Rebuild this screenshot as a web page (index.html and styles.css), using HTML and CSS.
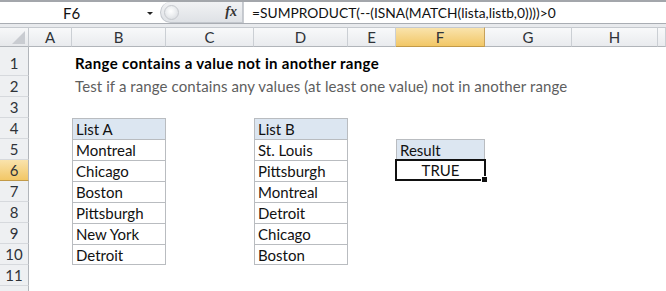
FILE: index.html
```html
<!DOCTYPE html>
<html>
<head>
<meta charset="utf-8">
<link rel="stylesheet" href="styles.css">
</head>
<body>
<div class="app">
  <div class="fbar">
    <div class="namebox"><span class="name">F6</span><span class="arrow"></span></div>
    <div class="fxpill"><span class="knob"></span><span class="fx">fx</span></div>
    <div class="formula">=SUMPRODUCT(--(ISNA(MATCH(lista,listb,0))))&gt;0</div>
  </div>
  <div class="band"></div>
  <div class="sheet">
    <div class="corner"><svg width="29" height="20" viewBox="0 0 29 20"><polygon points="12,17 25,17 25,4" fill="#c9ccd1"/></svg></div>
    <div class="ch">A</div>
    <div class="ch">B</div>
    <div class="ch">C</div>
    <div class="ch">D</div>
    <div class="ch">E</div>
    <div class="ch sel">F</div>
    <div class="ch">G</div>
    <div class="ch">H</div>
    <div class="ch last"></div>

    <div class="rh r1">1</div>
    <div class="rh r2">2</div>
    <div class="rh r3">3</div>
    <div class="rh r4">4</div>
    <div class="rh r5">5</div>
    <div class="rh r6 sel">6</div>
    <div class="rh r7">7</div>
    <div class="rh r8">8</div>
    <div class="rh r9">9</div>
    <div class="rh r10">10</div>
    <div class="rh r11">11</div>
    <div class="rh r12"></div>

    <div class="title">Range contains a value not in another range</div>
    <div class="subtitle">Test if a range contains any values (at least one value) not in another range</div>

    <div class="list list-a">
      <div class="item head">List A</div>
      <div class="item">Montreal</div>
      <div class="item">Chicago</div>
      <div class="item">Boston</div>
      <div class="item">Pittsburgh</div>
      <div class="item">New York</div>
      <div class="item">Detroit</div>
    </div>

    <div class="list list-b">
      <div class="item head">List B</div>
      <div class="item">St. Louis</div>
      <div class="item">Pittsburgh</div>
      <div class="item">Montreal</div>
      <div class="item">Detroit</div>
      <div class="item">Chicago</div>
      <div class="item">Boston</div>
    </div>

    <div class="result-head">Result</div>
    <div class="result">TRUE<span class="handle"></span></div>
  </div>
</div>
</body>
</html>
```
FILE: styles.css
```css
html, body {
  margin: 0;
  padding: 0;
  background: #ffffff;
}
.app {
  width: 666px;
  height: 291px;
  overflow: hidden;
  font-family: Lato, "Open Sans", sans-serif;
  color: #1a1a1a;
}
.fbar {
  height: 21px;
  border-top: 2px solid #a3a6ab;
  display: flex;
  background: #ffffff;
}
.namebox {
  width: 160px;
  display: flex;
  align-items: center;
}
.name {
  width: 143px;
  text-align: center;
  font-size: 15px;
  color: #111;
}
.arrow {
  width: 0;
  height: 0;
  border-left: 3px solid transparent;
  border-right: 3px solid transparent;
  border-top: 3px solid #222;
  margin-left: 4px;
  margin-top: 1px;
}
.fxpill {
  width: 83px;
  height: 21px;
  background: linear-gradient(#f1f2f4, #dfe2e6);
  border: 1px solid #c3c7cd;
  border-top: none;
  border-top-left-radius: 11px;
  border-bottom-left-radius: 11px;
  display: flex;
  align-items: center;
  justify-content: space-between;
  box-sizing: border-box;
  padding: 0 5px 0 3px;
}
.knob {
  width: 15px;
  height: 15px;
  border-radius: 50%;
  background: radial-gradient(circle at 45% 40%, #ffffff 0, #eef0f2 40%, #d3d6db 100%);
  border: 1px solid #c6c9ce;
  box-sizing: border-box;
}
.fx {
  font-family: "Liberation Serif", serif;
  font-style: italic;
  font-weight: bold;
  font-size: 14px;
  color: #333;
}
.formula {
  flex: 1;
  border-left: 1px solid #c9ccd1;
  padding-left: 8px;
  font-size: 13.8px;
  line-height: 21px;
  color: #111;
  white-space: nowrap;
}
.band {
  height: 3px;
  border-top: 1px solid #a9adb3;
  background: #e8eaed;
}
.sheet {
  display: grid;
  grid-template-columns: 29px 43px 94px 88px 94px 48px 89px 87px 86px 8px;
  grid-template-rows: 20px 29px repeat(10, 21px) 21px;
}
.corner {
  grid-row: 1;
  grid-column: 1;
  background: linear-gradient(#f7f8f9, #e6e8eb);
  border-right: 1px solid #c5c9ce;
  border-bottom: 1px solid #b1b5ba;
  border-top: 1px solid #c5c9ce;
  box-sizing: border-box;
}
.corner svg {
  display: block;
  margin-top: -1px;
}
.ch {
  grid-row: 1;
  background: linear-gradient(#f8f9fa, #e9ebee);
  border-right: 1px solid #cbcfd4;
  border-bottom: 1px solid #b1b5ba;
  border-top: 1px solid #c5c9ce;
  box-sizing: border-box;
  text-align: center;
  font-size: 15px;
  line-height: 18px;
  color: #2f3338;
}
.ch.sel {
  background: linear-gradient(#f9e3ac, #f2c766);
  border-right-color: #c7a15a;
  border-bottom-color: #c29a48;
}
.rh {
  grid-column: 1;
  background: #eef0f2;
  border-right: 1px solid #b1b5ba;
  border-bottom: 1px solid #d6d9dd;
  box-sizing: border-box;
  font-size: 15px;
  color: #2f3338;
  display: flex;
  align-items: flex-end;
  justify-content: center;
  line-height: 20px;
}
.rh.sel {
  background: linear-gradient(#f9e3ac, #f2c766);
  border-bottom-color: #c29a48;
}
.r1 { grid-row: 2; line-height: 24px; }
.r2 { grid-row: 3; }
.r3 { grid-row: 4; }
.r4 { grid-row: 5; }
.r5 { grid-row: 6; }
.r6 { grid-row: 7; }
.r7 { grid-row: 8; }
.r8 { grid-row: 9; }
.r9 { grid-row: 10; }
.r10 { grid-row: 11; }
.r11 { grid-row: 12; }
.r12 { grid-row: 13; }

.title {
  grid-row: 2;
  grid-column: 3 / 11;
  align-self: end;
  padding-left: 3px;
  padding-bottom: 2px;
  font-size: 15px;
  font-weight: bold;
  letter-spacing: 0.33px;
  line-height: 21px;
  color: #000;
  white-space: nowrap;
}
.subtitle {
  grid-row: 3;
  grid-column: 3 / 11;
  padding-left: 3px;
  font-size: 15px;
  letter-spacing: 0.1px;
  line-height: 21px;
  color: #5e5e5e;
  white-space: nowrap;
}
.list {
  grid-row: 5 / 12;
  display: flex;
  flex-direction: column;
  border: 1px solid #b9bcc0;
}
.list-a { grid-column: 3; }
.list-b { grid-column: 5; }
.item {
  flex: 1;
  border-bottom: 1px solid #b9bcc0;
  padding-left: 3px;
  font-size: 15px;
  line-height: 20px;
  color: #111;
  white-space: nowrap;
}
.item:last-child { border-bottom: none; }
.item.head { background: #dce6f1; }

.result-head {
  grid-row: 6;
  grid-column: 7;
  background: #dce6f1;
  border: 1px solid #b9bcc0;
  border-bottom: none;
  padding-left: 3px;
  font-size: 15px;
  line-height: 20px;
  color: #111;
}
.result {
  grid-row: 7;
  grid-column: 7;
  border: 2px solid #111;
  margin: -1px -1px 0 -1px;
  text-align: center;
  font-size: 15px;
  line-height: 18px;
  color: #111;
  position: relative;
}
.handle {
  position: absolute;
  right: -4px;
  bottom: -4px;
  width: 5px;
  height: 5px;
  background: #111;
  border: 1px solid #fff;
}
```
